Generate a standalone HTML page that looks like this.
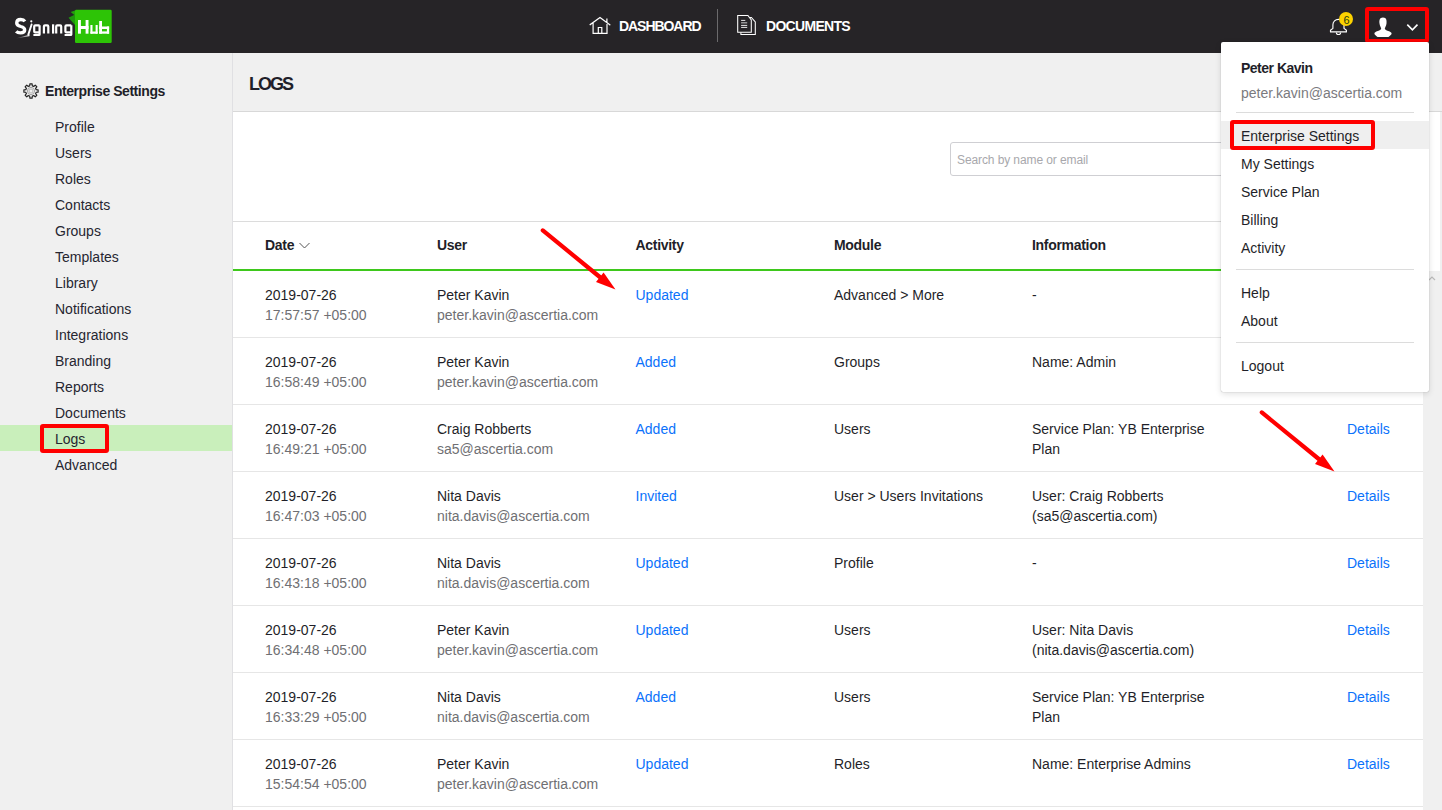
<!DOCTYPE html>
<html><head><meta charset="utf-8"><title>SigningHub Logs</title>
<style>
html,body{margin:0;padding:0;}
body{width:1442px;height:810px;overflow:hidden;position:relative;background:#f0f0f0;font-family:"Liberation Sans",sans-serif;}
.t{position:absolute;white-space:nowrap;line-height:20px;}
#hdr{position:absolute;left:0;top:0;width:1442px;height:53px;background:#262427;}
#dd{position:absolute;left:1221px;top:42px;width:208px;height:350px;background:#fff;border-radius:2px;box-shadow:0 0 1px rgba(0,0,0,0.4),0 2px 6px rgba(0,0,0,0.12);}
</style></head><body>
<div id="hdr"></div>
<svg style="position:absolute;left:0;top:0" width="130" height="53" viewBox="0 0 130 53">
<defs><linearGradient id="sw" x1="0" x2="1" y1="0" y2="0"><stop offset="0" stop-color="#fff" stop-opacity="0"/><stop offset="1" stop-color="#fff" stop-opacity="0.9"/></linearGradient></defs>
<rect x="75" y="9.8" width="36.7" height="33.1" rx="1.2" fill="#2dc406"/>
<polygon points="70.6,12 75,10.5 75,15.5" fill="#22a00c"/>
<polygon points="68.5,17.8 75,14.5 75,25" fill="#1f960e"/>
<g fill="#fff">
<rect x="78" y="20" width="2.9" height="13.7"/><rect x="85.6" y="20" width="2.9" height="13.7"/><rect x="78" y="26" width="10.5" height="3"/>
<rect x="90.4" y="25" width="2.1" height="8.7"/><rect x="95.6" y="25" width="2.1" height="8.7"/><rect x="90.4" y="31.4" width="7.3" height="2.3" rx="0.6"/>
<rect x="99.2" y="21" width="2.8" height="12.7"/><rect x="106.9" y="26.5" width="2.2" height="7.2"/><rect x="99.2" y="26.5" width="9.9" height="2.5"/><rect x="99.2" y="31.4" width="9.9" height="2.3"/>
</g>
<path d="M24.9 21.3 C24 19.9 22.6 19.5 20.7 19.5 C17.8 19.5 16.7 21 16.7 23 C16.7 25.2 18.4 25.9 20.8 26.5 C23.5 27.1 24.7 28 24.7 30.1 C24.7 32.1 23.1 32.9 20.6 32.9 C18.6 32.9 17.2 32.4 16.2 31.3" fill="none" stroke="#fff" stroke-width="3.3"/>
<path d="M31.6 24.5 L28.3 34.6" stroke="#fff" stroke-width="1.9" stroke-linecap="round"/>
<circle cx="31.3" cy="21.3" r="1.1" fill="#fff"/>
<polygon points="15.5,38.6 29.8,34.6 29.4,36.2" fill="url(#sw)"/>
<g fill="none" stroke="#fff" stroke-width="2.2" stroke-linejoin="round">
<path d="M39.6 25.3 H35.3 Q34.2 25.3 34.2 26.4 V31.4 Q34.2 32.4 35.3 32.4 H39.6 M39.6 25.2 V34.4 Q39.6 35 39 35 H33.4"/>
<path d="M43.9 33.6 V26.5 Q43.9 25.4 45 25.4 H47.2 Q48.3 25.4 48.3 26.5 V33.6"/>
<path d="M53.1 24.3 V33.6"/>
<path d="M56.2 33.6 V26.5 Q56.2 25.4 57.3 25.4 H60.1 Q61.2 25.4 61.2 26.5 V33.6"/>
<path d="M71.3 25.3 H66.5 Q65.4 25.3 65.4 26.4 V31.4 Q65.4 32.4 66.5 32.4 H71.3 M71.3 25.2 V34.4 Q71.3 35 70.7 35 H64.6"/>
</g>
</svg>
<svg style="position:absolute;left:588px;top:15px" width="24" height="21" viewBox="0 0 24 21">
<path d="M2.2 9.6 L12 2.4 L21.8 9.8 M5.1 7.6 V18.4 H19 V7.6 M10.3 18.4 V12.5 H13.8 V18.4 M18.9 4.2 V7" fill="none" stroke="#fff" stroke-width="1.2" stroke-linecap="square"/>
</svg>
<div class="t" style="left:619px;top:16px;font-size:14px;color:#fff;font-weight:bold;letter-spacing:-1.05px;">DASHBOARD</div>
<div style="position:absolute;left:717px;top:9px;width:1px;height:33px;background:#6b6a6c"></div>
<svg style="position:absolute;left:735px;top:13px" width="24" height="24" viewBox="0 0 24 24">
<path d="M2.7 2.4 H12.9 L16.3 7 V19.2 H2.7 Z" fill="none" stroke="#fff" stroke-width="1.05"/>
<path d="M14.6 4.4 H16.4 L20.3 8.9 V21.4 H5.9 V19.4" fill="none" stroke="#fff" stroke-width="1.05"/>
<path d="M6.1 7.4 H10.3 M6.1 12.4 H12.2 M6.1 14.4 H12.2" stroke="#fff" stroke-width="0.9"/>
<path d="M6.1 9.8 H12.2" stroke="#aaa" stroke-width="1.3"/>
</svg>
<div class="t" style="left:766px;top:16px;font-size:14px;color:#fff;font-weight:bold;letter-spacing:-0.7px;">DOCUMENTS</div>
<svg style="position:absolute;left:1328px;top:15px" width="22" height="24" viewBox="0 0 22 24">
<path d="M4.9 13.4 V9.8 A5.55 5.5 0 0 1 16 9.8 V13.4 L18.4 15.2 V16.9 H2.5 V15.2 Z" fill="none" stroke="#fff" stroke-width="1.15" stroke-linejoin="round"/>
<path d="M8.4 17.4 A2.1 2.1 0 0 0 12.6 17.4" fill="none" stroke="#fff" stroke-width="1.15"/>
</svg>
<div style="position:absolute;left:1339px;top:11.7px;width:14.2px;height:14.2px;border-radius:50%;background:#fcd200"></div>
<div class="t" style="left:1343.5px;top:10px;font-size:11px;color:#1f3d10;">6</div>
<div style="position:absolute;left:1365px;top:7px;width:56px;height:28px;border:4px solid #ff0000;border-radius:3px"></div>
<svg style="position:absolute;left:1373px;top:16px" width="20" height="22" viewBox="0 0 20 22">
<path d="M10 1.6 C6.6 1.6 6.1 4.5 6.5 7.5 C6.8 10 8 11.6 8.2 12.6 C8.2 13.6 7 14.3 4.8 15.1 C2.6 15.9 1.4 16.6 1.4 17.5 C1.4 18.6 3.3 20.2 4.6 21 H15.4 C16.7 20.2 18.6 18.6 18.6 17.5 C18.6 16.6 17.4 15.9 15.2 15.1 C13 14.3 11.8 13.6 11.8 12.6 C12 11.6 13.2 10 13.5 7.5 C13.9 4.5 13.4 1.6 10 1.6 Z" fill="#fff"/>
</svg>
<svg style="position:absolute;left:1405px;top:22px" width="14" height="10" viewBox="0 0 14 10">
<path d="M2.3 2.6 L7.4 7.8 L12.5 2.6" fill="none" stroke="#fff" stroke-width="1.6"/>
</svg>
<div style="position:absolute;left:232px;top:53px;width:1px;height:757px;background:#e0e0e3"></div>
<svg style="position:absolute;left:22px;top:82px" width="18" height="18" viewBox="0 0 18 18">
<path d="M6.97 4.10 L7.72 3.86 L7.87 1.89 L10.13 1.89 L10.28 3.86 L11.03 4.10 L11.73 4.46 L13.23 3.18 L14.82 4.77 L13.54 6.27 L13.90 6.97 L14.14 7.72 L16.11 7.87 L16.11 10.13 L14.14 10.28 L13.90 11.03 L13.54 11.73 L14.82 13.23 L13.23 14.82 L11.73 13.54 L11.03 13.90 L10.28 14.14 L10.13 16.11 L7.87 16.11 L7.72 14.14 L6.97 13.90 L6.27 13.54 L4.77 14.82 L3.18 13.23 L4.46 11.73 L4.10 11.03 L3.86 10.28 L1.89 10.13 L1.89 7.87 L3.86 7.72 L4.10 6.97 L4.46 6.27 L3.18 4.77 L4.77 3.18 L6.27 4.46 Z" fill="none" stroke="#222" stroke-width="1.15" stroke-linejoin="round"/>
<circle cx="9" cy="9" r="3.6" fill="none" stroke="#999" stroke-width="0.9"/>
<circle cx="9" cy="9" r="2" fill="none" stroke="#aaa" stroke-width="0.8"/>
</svg>
<div class="t" style="left:45px;top:81px;font-size:14px;color:#1f1f29;font-weight:bold;letter-spacing:-0.45px;">Enterprise Settings</div>
<div style="position:absolute;left:0;top:425px;width:232px;height:26px;background:#c9efbb"></div>
<div class="t" style="left:55px;top:117px;font-size:14px;color:#262630;">Profile</div>
<div class="t" style="left:55px;top:143px;font-size:14px;color:#262630;">Users</div>
<div class="t" style="left:55px;top:169px;font-size:14px;color:#262630;">Roles</div>
<div class="t" style="left:55px;top:195px;font-size:14px;color:#262630;">Contacts</div>
<div class="t" style="left:55px;top:221px;font-size:14px;color:#262630;">Groups</div>
<div class="t" style="left:55px;top:247px;font-size:14px;color:#262630;">Templates</div>
<div class="t" style="left:55px;top:273px;font-size:14px;color:#262630;">Library</div>
<div class="t" style="left:55px;top:299px;font-size:14px;color:#262630;">Notifications</div>
<div class="t" style="left:55px;top:325px;font-size:14px;color:#262630;">Integrations</div>
<div class="t" style="left:55px;top:351px;font-size:14px;color:#262630;">Branding</div>
<div class="t" style="left:55px;top:377px;font-size:14px;color:#262630;">Reports</div>
<div class="t" style="left:55px;top:403px;font-size:14px;color:#262630;">Documents</div>
<div class="t" style="left:55px;top:429px;font-size:14px;color:#262630;">Logs</div>
<div class="t" style="left:55px;top:455px;font-size:14px;color:#262630;">Advanced</div>
<div style="position:absolute;left:40px;top:424px;width:61px;height:21px;border:4px solid #ff0000;border-radius:3px"></div>
<div style="position:absolute;left:233px;top:111px;width:1209px;height:1px;background:#d8d8d8"></div>
<div class="t" style="left:249px;top:74px;font-size:18px;color:#1f1f29;font-weight:bold;letter-spacing:-2px;">LOGS</div>
<div style="position:absolute;left:233px;top:112px;width:1207px;height:159px;background:#fff"></div>
<div style="position:absolute;left:233px;top:221px;width:1190px;height:1px;background:#dcdcdc"></div>
<div style="position:absolute;left:950px;top:142px;width:300px;height:32px;border:1px solid #cfcfd3;border-radius:3px;background:#fff"></div>
<div class="t" style="left:957px;top:150px;font-size:12px;color:#a8a8ac;letter-spacing:-0.1px;">Search by name or email</div>
<div style="position:absolute;left:233px;top:269px;width:1190px;height:2px;background:#3ec81c"></div>
<div class="t" style="left:265px;top:235px;font-size:14px;color:#1f1f29;font-weight:bold;letter-spacing:-0.3px;">Date</div>
<div class="t" style="left:437px;top:235px;font-size:14px;color:#1f1f29;font-weight:bold;letter-spacing:-0.3px;">User</div>
<div class="t" style="left:635.5px;top:235px;font-size:14px;color:#1f1f29;font-weight:bold;letter-spacing:-0.3px;">Activity</div>
<div class="t" style="left:834px;top:235px;font-size:14px;color:#1f1f29;font-weight:bold;letter-spacing:-0.3px;">Module</div>
<div class="t" style="left:1032px;top:235px;font-size:14px;color:#1f1f29;font-weight:bold;letter-spacing:-0.3px;">Information</div>
<svg style="position:absolute;left:297.5px;top:240px" width="14" height="10" viewBox="0 0 14 10">
<path d="M1.5 3 L6.5 8 L11.5 3" fill="none" stroke="#555" stroke-width="1"/>
</svg>
<div style="position:absolute;left:233px;top:271px;width:1190px;height:539px;background:#fff"></div>
<div style="position:absolute;left:233px;top:337px;width:1190px;height:1px;background:#e6e6e6"></div>
<div class="t" style="left:265px;top:285px;font-size:14px;color:#1f1f29;">2019-07-26</div>
<div class="t" style="left:265px;top:305px;font-size:14px;color:#6f6f73;">17:57:57 +05:00</div>
<div class="t" style="left:437px;top:285px;font-size:14px;color:#1f1f29;">Peter Kavin</div>
<div class="t" style="left:437px;top:305px;font-size:14px;color:#6f6f73;">peter.kavin@ascertia.com</div>
<div class="t" style="left:635.5px;top:285px;font-size:14px;color:#0b72fb;">Updated</div>
<div class="t" style="left:834px;top:285px;font-size:14px;color:#1f1f29;">Advanced &gt; More</div>
<div class="t" style="left:1032px;top:285px;font-size:14px;color:#1f1f29;">-</div>
<div class="t" style="left:1347px;top:285px;font-size:14px;color:#0b72fb;">Details</div>
<div style="position:absolute;left:233px;top:404px;width:1190px;height:1px;background:#e6e6e6"></div>
<div class="t" style="left:265px;top:352px;font-size:14px;color:#1f1f29;">2019-07-26</div>
<div class="t" style="left:265px;top:372px;font-size:14px;color:#6f6f73;">16:58:49 +05:00</div>
<div class="t" style="left:437px;top:352px;font-size:14px;color:#1f1f29;">Peter Kavin</div>
<div class="t" style="left:437px;top:372px;font-size:14px;color:#6f6f73;">peter.kavin@ascertia.com</div>
<div class="t" style="left:635.5px;top:352px;font-size:14px;color:#0b72fb;">Added</div>
<div class="t" style="left:834px;top:352px;font-size:14px;color:#1f1f29;">Groups</div>
<div class="t" style="left:1032px;top:352px;font-size:14px;color:#1f1f29;">Name: Admin</div>
<div class="t" style="left:1347px;top:352px;font-size:14px;color:#0b72fb;">Details</div>
<div style="position:absolute;left:233px;top:471px;width:1190px;height:1px;background:#e6e6e6"></div>
<div class="t" style="left:265px;top:419px;font-size:14px;color:#1f1f29;">2019-07-26</div>
<div class="t" style="left:265px;top:439px;font-size:14px;color:#6f6f73;">16:49:21 +05:00</div>
<div class="t" style="left:437px;top:419px;font-size:14px;color:#1f1f29;">Craig Robberts</div>
<div class="t" style="left:437px;top:439px;font-size:14px;color:#6f6f73;">sa5@ascertia.com</div>
<div class="t" style="left:635.5px;top:419px;font-size:14px;color:#0b72fb;">Added</div>
<div class="t" style="left:834px;top:419px;font-size:14px;color:#1f1f29;">Users</div>
<div class="t" style="left:1032px;top:419px;font-size:14px;color:#1f1f29;">Service Plan: YB Enterprise</div>
<div class="t" style="left:1032px;top:439px;font-size:14px;color:#1f1f29;">Plan</div>
<div class="t" style="left:1347px;top:419px;font-size:14px;color:#0b72fb;">Details</div>
<div style="position:absolute;left:233px;top:538px;width:1190px;height:1px;background:#e6e6e6"></div>
<div class="t" style="left:265px;top:486px;font-size:14px;color:#1f1f29;">2019-07-26</div>
<div class="t" style="left:265px;top:506px;font-size:14px;color:#6f6f73;">16:47:03 +05:00</div>
<div class="t" style="left:437px;top:486px;font-size:14px;color:#1f1f29;">Nita Davis</div>
<div class="t" style="left:437px;top:506px;font-size:14px;color:#6f6f73;">nita.davis@ascertia.com</div>
<div class="t" style="left:635.5px;top:486px;font-size:14px;color:#0b72fb;">Invited</div>
<div class="t" style="left:834px;top:486px;font-size:14px;color:#1f1f29;">User &gt; Users Invitations</div>
<div class="t" style="left:1032px;top:486px;font-size:14px;color:#1f1f29;">User: Craig Robberts</div>
<div class="t" style="left:1032px;top:506px;font-size:14px;color:#1f1f29;">(sa5@ascertia.com)</div>
<div class="t" style="left:1347px;top:486px;font-size:14px;color:#0b72fb;">Details</div>
<div style="position:absolute;left:233px;top:605px;width:1190px;height:1px;background:#e6e6e6"></div>
<div class="t" style="left:265px;top:553px;font-size:14px;color:#1f1f29;">2019-07-26</div>
<div class="t" style="left:265px;top:573px;font-size:14px;color:#6f6f73;">16:43:18 +05:00</div>
<div class="t" style="left:437px;top:553px;font-size:14px;color:#1f1f29;">Nita Davis</div>
<div class="t" style="left:437px;top:573px;font-size:14px;color:#6f6f73;">nita.davis@ascertia.com</div>
<div class="t" style="left:635.5px;top:553px;font-size:14px;color:#0b72fb;">Updated</div>
<div class="t" style="left:834px;top:553px;font-size:14px;color:#1f1f29;">Profile</div>
<div class="t" style="left:1032px;top:553px;font-size:14px;color:#1f1f29;">-</div>
<div class="t" style="left:1347px;top:553px;font-size:14px;color:#0b72fb;">Details</div>
<div style="position:absolute;left:233px;top:672px;width:1190px;height:1px;background:#e6e6e6"></div>
<div class="t" style="left:265px;top:620px;font-size:14px;color:#1f1f29;">2019-07-26</div>
<div class="t" style="left:265px;top:640px;font-size:14px;color:#6f6f73;">16:34:48 +05:00</div>
<div class="t" style="left:437px;top:620px;font-size:14px;color:#1f1f29;">Peter Kavin</div>
<div class="t" style="left:437px;top:640px;font-size:14px;color:#6f6f73;">peter.kavin@ascertia.com</div>
<div class="t" style="left:635.5px;top:620px;font-size:14px;color:#0b72fb;">Updated</div>
<div class="t" style="left:834px;top:620px;font-size:14px;color:#1f1f29;">Users</div>
<div class="t" style="left:1032px;top:620px;font-size:14px;color:#1f1f29;">User: Nita Davis</div>
<div class="t" style="left:1032px;top:640px;font-size:14px;color:#1f1f29;">(nita.davis@ascertia.com)</div>
<div class="t" style="left:1347px;top:620px;font-size:14px;color:#0b72fb;">Details</div>
<div style="position:absolute;left:233px;top:739px;width:1190px;height:1px;background:#e6e6e6"></div>
<div class="t" style="left:265px;top:687px;font-size:14px;color:#1f1f29;">2019-07-26</div>
<div class="t" style="left:265px;top:707px;font-size:14px;color:#6f6f73;">16:33:29 +05:00</div>
<div class="t" style="left:437px;top:687px;font-size:14px;color:#1f1f29;">Nita Davis</div>
<div class="t" style="left:437px;top:707px;font-size:14px;color:#6f6f73;">nita.davis@ascertia.com</div>
<div class="t" style="left:635.5px;top:687px;font-size:14px;color:#0b72fb;">Added</div>
<div class="t" style="left:834px;top:687px;font-size:14px;color:#1f1f29;">Users</div>
<div class="t" style="left:1032px;top:687px;font-size:14px;color:#1f1f29;">Service Plan: YB Enterprise</div>
<div class="t" style="left:1032px;top:707px;font-size:14px;color:#1f1f29;">Plan</div>
<div class="t" style="left:1347px;top:687px;font-size:14px;color:#0b72fb;">Details</div>
<div style="position:absolute;left:233px;top:806px;width:1190px;height:1px;background:#e6e6e6"></div>
<div class="t" style="left:265px;top:754px;font-size:14px;color:#1f1f29;">2019-07-26</div>
<div class="t" style="left:265px;top:774px;font-size:14px;color:#6f6f73;">15:54:54 +05:00</div>
<div class="t" style="left:437px;top:754px;font-size:14px;color:#1f1f29;">Peter Kavin</div>
<div class="t" style="left:437px;top:774px;font-size:14px;color:#6f6f73;">peter.kavin@ascertia.com</div>
<div class="t" style="left:635.5px;top:754px;font-size:14px;color:#0b72fb;">Updated</div>
<div class="t" style="left:834px;top:754px;font-size:14px;color:#1f1f29;">Roles</div>
<div class="t" style="left:1032px;top:754px;font-size:14px;color:#1f1f29;">Name: Enterprise Admins</div>
<div class="t" style="left:1347px;top:754px;font-size:14px;color:#0b72fb;">Details</div>
<svg style="position:absolute;left:1428px;top:273px" width="12" height="12" viewBox="0 0 12 12">
<path d="M1 7 L4 4 L7 7" fill="none" stroke="#bbb" stroke-width="1.2"/>
</svg>
<svg style="position:absolute;left:0px;top:0px;overflow:visible" width="1" height="1">
<line x1="542.8" y1="230.4" x2="601" y2="278" stroke="#ff0000" stroke-width="4.2" stroke-linecap="round"/>
<polygon points="615.5,289.5 603.6,272.6 596,282" fill="#ff0000"/>
</svg>
<svg style="position:absolute;left:719px;top:182px;overflow:visible" width="1" height="1">
<line x1="542.8" y1="230.4" x2="601" y2="278" stroke="#ff0000" stroke-width="4.2" stroke-linecap="round"/>
<polygon points="615.5,289.5 603.6,272.6 596,282" fill="#ff0000"/>
</svg>
<div id="dd"></div>
<div style="position:absolute;left:1221px;top:121px;width:208px;height:28px;background:#efefef"></div>
<div class="t" style="left:1241px;top:58px;font-size:14px;color:#1f1f29;font-weight:bold;letter-spacing:-0.5px;">Peter Kavin</div>
<div class="t" style="left:1241px;top:83px;font-size:14px;color:#7a7a7e;">peter.kavin@ascertia.com</div>
<div style="position:absolute;left:1236px;top:112px;width:178px;height:1px;background:#dcdcdc"></div>
<div style="position:absolute;left:1236px;top:269px;width:178px;height:1px;background:#dcdcdc"></div>
<div style="position:absolute;left:1236px;top:342px;width:178px;height:1px;background:#dcdcdc"></div>
<div class="t" style="left:1241px;top:126px;font-size:14px;color:#1f1f29;">Enterprise Settings</div>
<div class="t" style="left:1241px;top:154px;font-size:14px;color:#1f1f29;">My Settings</div>
<div class="t" style="left:1241px;top:182px;font-size:14px;color:#1f1f29;">Service Plan</div>
<div class="t" style="left:1241px;top:210px;font-size:14px;color:#1f1f29;">Billing</div>
<div class="t" style="left:1241px;top:238px;font-size:14px;color:#1f1f29;">Activity</div>
<div class="t" style="left:1241px;top:283px;font-size:14px;color:#1f1f29;">Help</div>
<div class="t" style="left:1241px;top:311px;font-size:14px;color:#1f1f29;">About</div>
<div class="t" style="left:1241px;top:356px;font-size:14px;color:#1f1f29;">Logout</div>
<div style="position:absolute;left:1230px;top:120px;width:137px;height:22px;border:4px solid #ff0000;border-radius:3px"></div>
</body></html>
